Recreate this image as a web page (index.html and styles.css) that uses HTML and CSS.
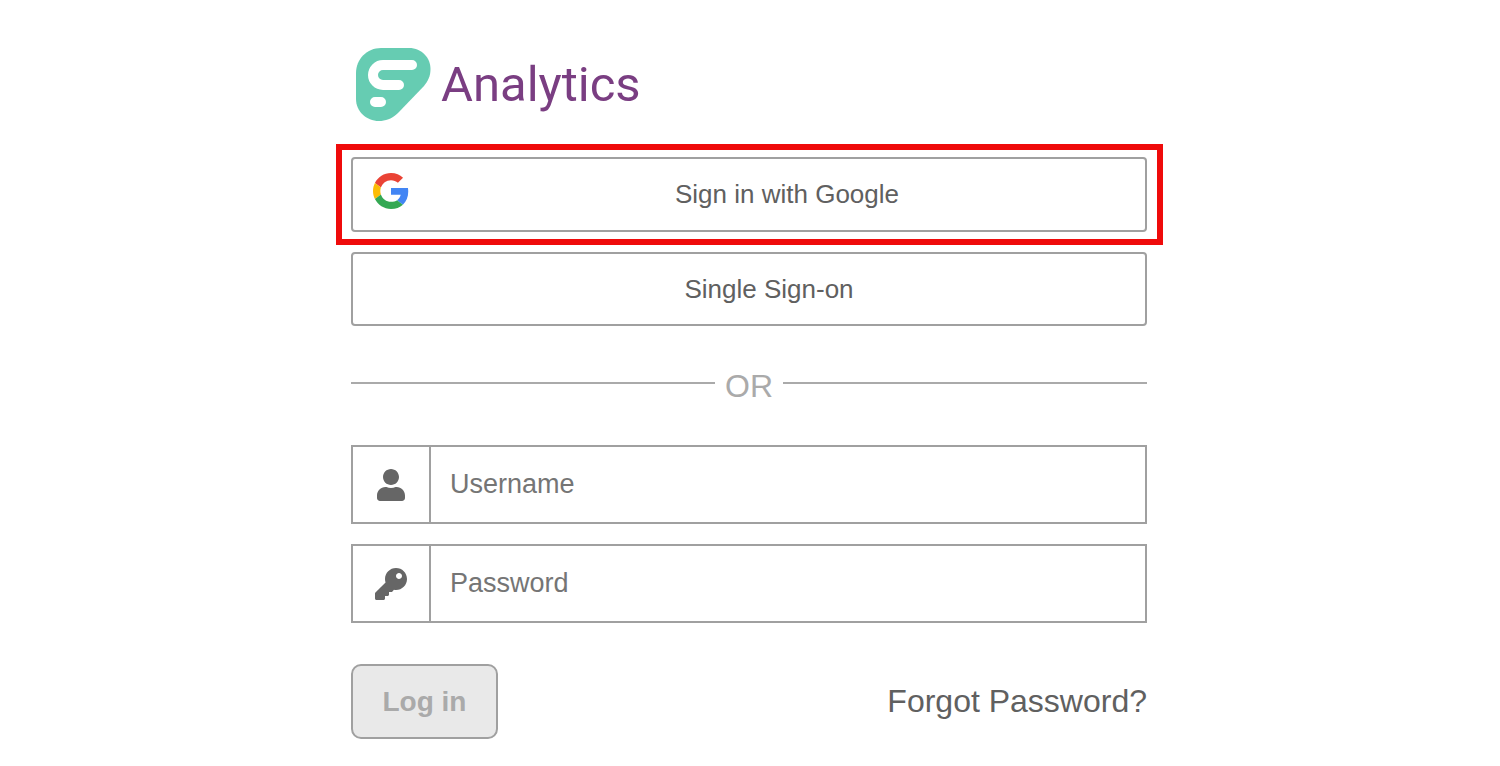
FILE: index.html
```html
<!DOCTYPE html>
<html lang="en">
<head>
    <meta charset="UTF-8">
    <meta name="viewport" content="width=device-width, initial-scale=1.0">
    <title>Analytics - Log in</title>
    <link rel="stylesheet" href="styles.css">
</head>
<body>
    <main class="login">
        <h1 class="logo">
            <svg class="logo-mark" viewBox="0 0 75 73" aria-hidden="true">
                <path fill="#66ccb2" d="M25 0H53C66 0 74.500 10 74.500 21C74.500 28 72 33 68 38L42 65C36 71 29 73 23 73C10 73 0 63 0 51V25C0 11 11 0 25 0Z"/>
                <path fill="none" stroke="#fff" stroke-width="10" stroke-linecap="round" d="M56 17H27a10 10 0 0 0 0 20H43M19 54H25"/>
            </svg>
            <span>Analytics</span>
        </h1>

        <div class="highlight">
            <button type="button" class="sso-button google">
                <svg class="google-icon" viewBox="0 0 48 48" aria-hidden="true">
                    <path fill="#ea4335" d="M24 9.5c3.54 0 6.71 1.22 9.21 3.6l6.85-6.85C35.9 2.38 30.47 0 24 0 14.62 0 6.51 5.38 2.56 13.22l7.98 6.19C12.43 13.72 17.74 9.5 24 9.5z"/>
                    <path fill="#4285f4" d="M46.98 24.55c0-1.57-.15-3.09-.38-4.55H24v9.02h12.94c-.58 2.96-2.26 5.48-4.78 7.18l7.73 6c4.51-4.18 7.09-10.36 7.09-17.65z"/>
                    <path fill="#fbbc05" d="M10.53 28.59c-.48-1.45-.76-2.99-.76-4.59s.27-3.14.76-4.59l-7.98-6.19C.92 16.46 0 20.12 0 24c0 3.88.92 7.54 2.56 10.78l7.97-6.19z"/>
                    <path fill="#34a853" d="M24 48c6.48 0 11.93-2.13 15.89-5.81l-7.73-6c-2.15 1.45-4.92 2.3-8.16 2.3-6.26 0-11.57-4.22-13.47-9.91l-7.98 6.19C6.51 42.62 14.62 48 24 48z"/>
                </svg>
                <span class="sso-text">Sign in with Google</span>
            </button>
        </div>
        <button type="button" class="sso-button single">
            <span class="sso-text">Single Sign-on</span>
        </button>

        <div class="divider"><span>OR</span></div>

        <form>
            <div class="field">
                <label for="username" aria-label="Username">
                    <svg class="field-icon" viewBox="0 0 448 512" aria-hidden="true">
                        <path d="M224 256c70.7 0 128-57.3 128-128S294.7 0 224 0 96 57.3 96 128s57.3 128 128 128zm89.6 32h-16.7c-22.2 10.2-46.9 16-72.9 16s-50.6-5.8-72.9-16h-16.7C60.2 288 0 348.2 0 422.4V464c0 26.5 21.5 48 48 48h352c26.5 0 48-21.5 48-48v-41.6c0-74.2-60.2-134.4-134.4-134.4z"/>
                    </svg>
                </label>
                <input type="text" id="username" placeholder="Username">
            </div>
            <div class="field">
                <label for="password" aria-label="Password">
                    <svg class="field-icon" viewBox="0 0 512 512" aria-hidden="true">
                        <path d="M512 176C512 273.2 433.2 352 336 352c-11.2 0-22.2-1.1-32.8-3.1l-24 27A24 24 0 0 1 261.2 384H224v40c0 13.3-10.7 24-24 24h-40v40c0 13.3-10.7 24-24 24H24c-13.3 0-24-10.7-24-24v-78.1c0-6.4 2.5-12.5 7-17l161.8-161.8C163.1 213.8 160 195.3 160 176 160 78.8 238.8 0 336 0 433.5 0 512 78.5 512 176zM336 128c0 26.5 21.5 48 48 48s48-21.5 48-48-21.5-48-48-48-48 21.5-48 48z"/>
                    </svg>
                </label>
                <input type="password" id="password" placeholder="Password">
            </div>
            <div class="actions">
                <button type="submit" class="login-button" disabled>Log in</button>
                <a href="#" class="forgot">Forgot Password?</a>
            </div>
        </form>
    </main>
</body>
</html>
```

FILE: styles.css
```css
* {
    box-sizing: border-box;
}
body {
    margin: 0;
    padding: 48px 17px 24px 15px;
    background-color: #fff;
    color: #606060;
    font-family: "Liberation Sans", Arial, sans-serif;
}
button,
input {
    font-family: inherit;
}
.login {
    max-width: 796px;
    margin: 0 auto;
}
.logo {
    display: flex;
    align-items: center;
    gap: 10px;
    margin: 0 0 23px;
    padding-left: 5px;
    color: #7a3e82;
    font-family: Roboto, sans-serif;
    font-size: 49px;
    font-weight: 400;
    line-height: 73px;
}
.logo-mark {
    width: 75px;
    height: 73px;
}
.highlight {
    margin: 0 -16px 7px -15px;
    padding: 7px 10px 7px 9px;
    border: 6px solid #ef0b0b;
}
.sso-button {
    display: flex;
    align-items: center;
    width: 100%;
    height: 75px;
    padding: 0 0 0 20px;
    border: 2px solid #a0a0a0;
    border-radius: 4px;
    background-color: #fff;
    color: #606060;
    font-size: 26px;
    cursor: pointer;
}
.sso-button.google {
    gap: 20px;
}
.sso-button.single {
    height: 74px;
    padding-left: 40px;
}
.google-icon {
    width: 36px;
    height: 36px;
    margin-bottom: 8px;
}
.sso-text {
    flex: 1;
    text-align: center;
}
.divider {
    display: flex;
    align-items: center;
    gap: 10px;
    margin: 36px 0 41px;
    color: #aaa;
    font-size: 32px;
    line-height: 36px;
}
.divider::before,
.divider::after {
    content: "";
    flex: 1;
    height: 2px;
    background-color: #aaa;
}
.divider span {
    padding-top: 6px;
}
.field {
    display: flex;
    height: 79px;
    margin-bottom: 20px;
    border: 2px solid #a0a0a0;
}
.field label {
    display: flex;
    align-items: center;
    justify-content: center;
    width: 78px;
    border-right: 2px solid #a0a0a0;
}
.field-icon {
    height: 32px;
    fill: #666;
}
.field input {
    flex: 1;
    min-width: 0;
    padding: 0 19px;
    border: none;
    background: none;
    color: #606060;
    font-size: 27px;
}
.field input::placeholder {
    color: #757575;
}
.actions {
    display: flex;
    align-items: center;
    justify-content: space-between;
    margin-top: 41px;
}
.login-button {
    width: 147px;
    height: 75px;
    border: 2px solid #a0a0a0;
    border-radius: 10px;
    background-color: #e9e9e9;
    color: #aaa;
    font-size: 28px;
    font-weight: bold;
}
.forgot {
    color: #606060;
    font-size: 32px;
    text-decoration: none;
}
```
